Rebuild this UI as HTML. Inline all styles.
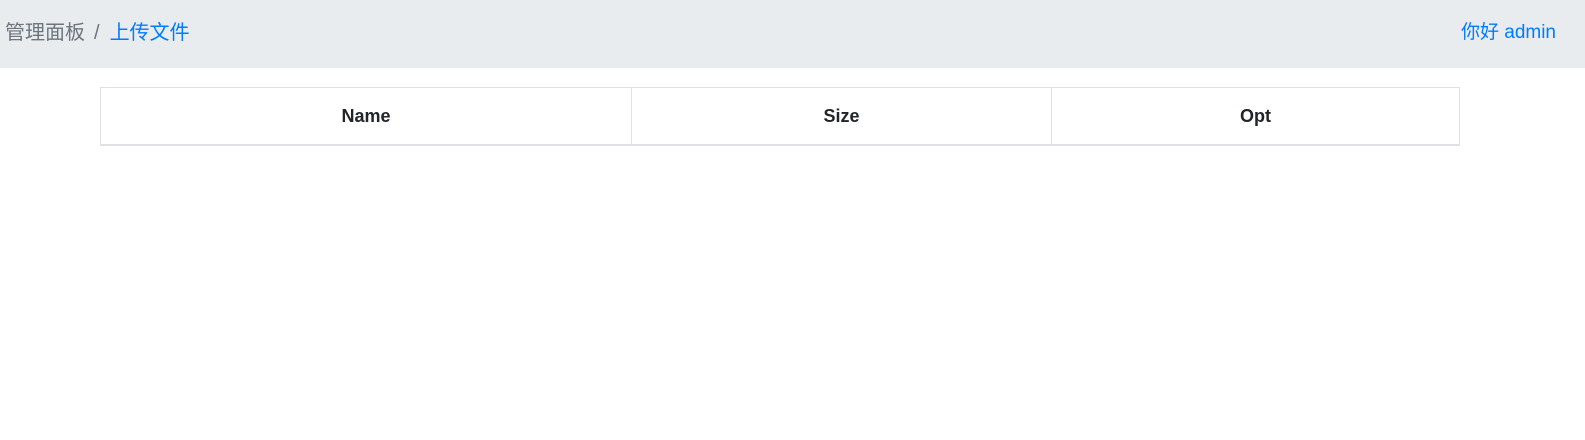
<!DOCTYPE html>
<html><head><meta charset="utf-8"><style>
body{margin:0;background:#fff;font-family:"Liberation Sans","Noto Sans CJK SC",sans-serif;}
.hd{height:68px;background:#e9ecef;position:relative;font-size:19px;}
.bc{position:absolute;left:5px;top:16px;color:#6c757d;font-size:20px;}
.bc .s{margin:0 10px 0 9px;}
.bc .a{color:#007bff;}
.r{position:absolute;right:29px;top:17px;color:#007bff;}
table{position:absolute;left:100px;top:87px;width:1360px;border-collapse:collapse;}
th{height:56px;border:1px solid #dee2e6;border-bottom:2px solid #dee2e6;font-size:18px;font-weight:bold;color:#212529;padding:0;}
</style></head><body>
<div class="hd"><div class="bc">管理面板<span class="s">/</span><span class="a">上传文件</span></div><div class="r">你好 admin</div></div>
<table><tr><th style="width:530px">Name</th><th style="width:419px">Size</th><th>Opt</th></tr></table>
</body></html>
